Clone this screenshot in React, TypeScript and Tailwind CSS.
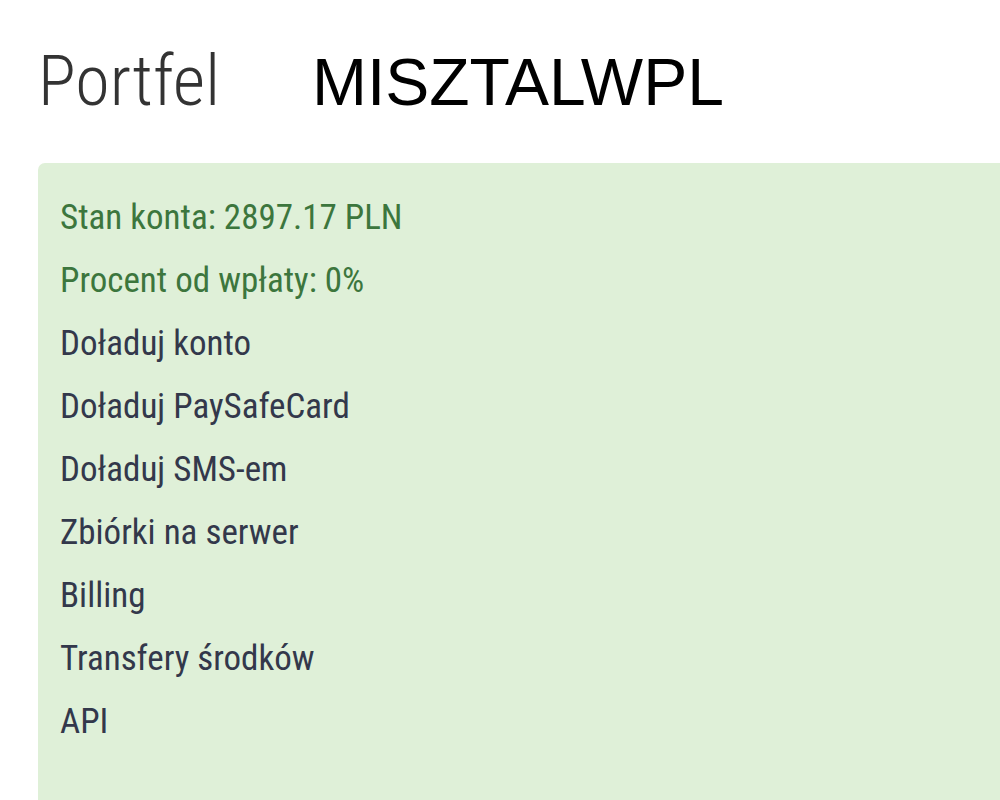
import React from 'react';

const links = [
  'Doładuj konto',
  'Doładuj PaySafeCard',
  'Doładuj SMS-em',
  'Zbiórki na serwer',
  'Billing',
  'Transfery środków',
  'API',
];

const App: React.FC = () => {
  return (
    <div className="min-h-screen bg-white overflow-hidden" style={{ fontFamily: '"Roboto Condensed", Roboto, sans-serif' }}>
      {/* Page header */}
      <div className="flex items-baseline pl-[38px] pt-[36px] h-[163px]">
        <h1 className="text-[70px] leading-[90px] font-light text-[#333333]">Portfel</h1>
        <span className="ml-[92px] text-[66px] leading-[90px] text-black font-['Liberation_Sans',Arial,sans-serif]">
          MISZTALWPL
        </span>
      </div>

      {/* Wallet panel */}
      <div className="ml-[38px] -mr-4 bg-[#dff0d8] rounded-tl-[7px] pl-[22px] pt-[23px] pb-[60px] h-[660px]">
        <p className="text-[35px] leading-[63px] text-[#3c763d]">Stan konta: 2897.17 PLN</p>
        <p className="text-[35px] leading-[63px] text-[#3c763d]">Procent od wpłaty: 0%</p>
        <ul className="flex flex-col">
          {links.map(l => (
            <li key={l} className="text-[35px] leading-[63px] text-[#33384b]">
              {l}
            </li>
          ))}
        </ul>
      </div>
    </div>
  );
};

export default App;
